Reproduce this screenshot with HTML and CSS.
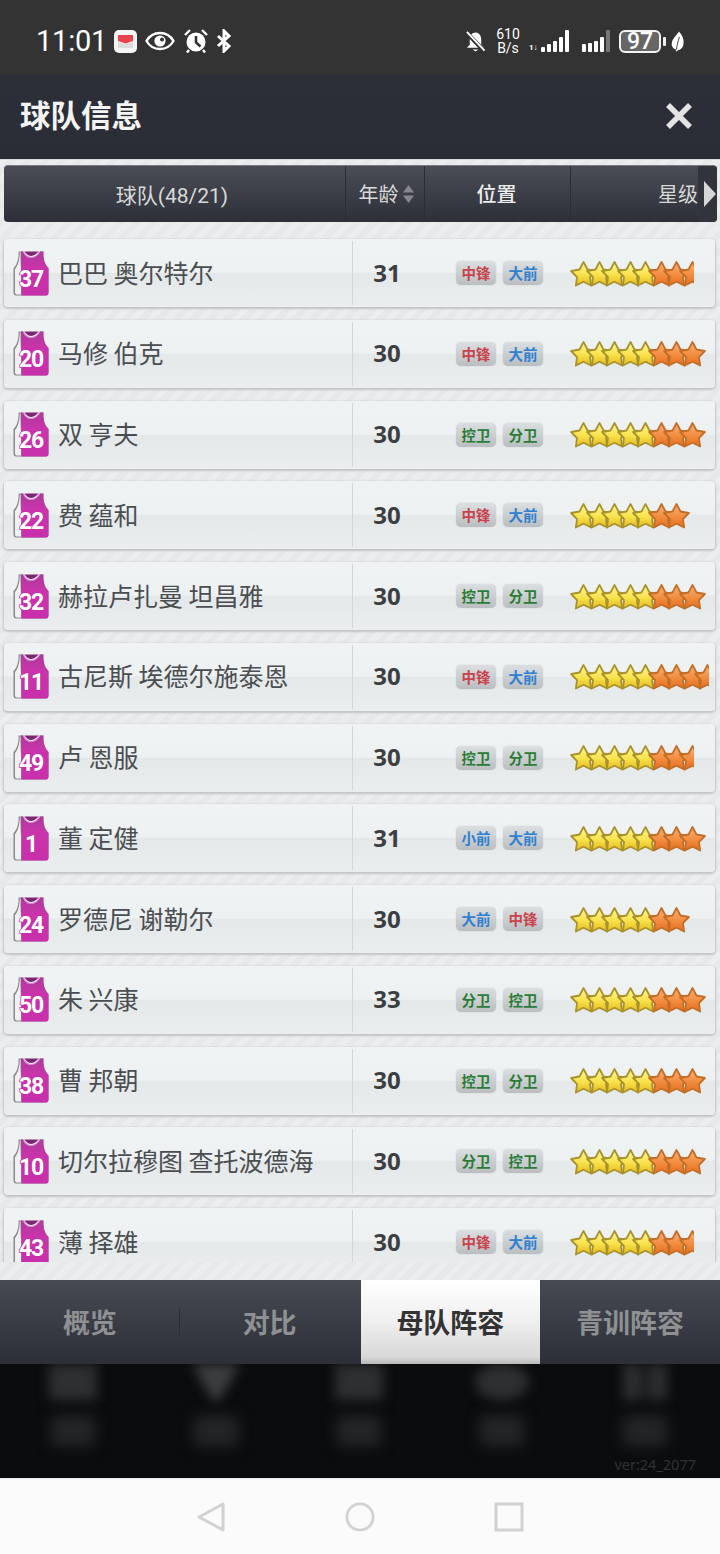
FILE: index.html
```html
<!DOCTYPE html>
<html lang="zh-CN">
<head>
<meta charset="utf-8">
<title>球队信息</title>
<link rel="stylesheet" href="styles.css">
</head>
<body>
<svg class="sprite" aria-hidden="true">
  <defs>
    <linearGradient id="gy" x1="0" y1="0" x2="0" y2="1"><stop offset="0" stop-color="#fff79a"/><stop offset=".55" stop-color="#f8e24a"/><stop offset="1" stop-color="#e4b81e"/></linearGradient>
    <linearGradient id="go" x1="0" y1="0" x2="0" y2="1"><stop offset="0" stop-color="#f9b27a"/><stop offset=".55" stop-color="#f28c3e"/><stop offset="1" stop-color="#e66e1e"/></linearGradient>
    <linearGradient id="gj" x1="0" y1="0" x2="0" y2="1"><stop offset="0" stop-color="#ad3a9a"/><stop offset=".35" stop-color="#c934ab"/><stop offset="1" stop-color="#c92fac"/></linearGradient>
    <symbol id="y" viewBox="0 0 27 28" overflow="visible"><path d="M13.5 2 17.5 9.500 25.860 11 19.970 17.100 21.140 25.500 13.500 21.800 5.860 25.500 7.030 17.100 1.140 11 9.500 9.500Z" fill="url(#gy)" stroke="#a8922e" stroke-width="1.800" stroke-linejoin="round"/></symbol>
    <symbol id="o" viewBox="0 0 27 28" overflow="visible"><path d="M13.5 2 17.5 9.500 25.860 11 19.970 17.100 21.140 25.500 13.500 21.800 5.860 25.500 7.030 17.100 1.140 11 9.500 9.500Z" fill="url(#go)" stroke="#c06e28" stroke-width="1.800" stroke-linejoin="round"/></symbol>
    <symbol id="j" viewBox="0 0 36 45">
      <path d="M5.500 .5H10C12 4.500 15 6.500 18 6.500S25 4.500 27 .5H30.500C30 6 31 13 35.500 17V41.500Q35.500 44.500 33 44.500H3Q.5 44.500 .5 41.500V17C4 14 6 7 5.500 .5Z" fill="#8a8a8d"/>
      <path d="M6.800 1.500 7.500 1.500C7.500 8 7.500 14 8 20V43.500H3.500Q2 43.500 2 41V18C5 15 6.800 8 6.800 1.500Z" fill="#f1f1f3"/>
      <path d="M8 .5H10C12 4.500 15 6.500 18 6.500S25 4.500 27 .5H30.500C30 6 31 13 35.500 17V41.500Q35.500 44.500 33 44.500H8.500V20C8 14 8 8 8 .5Z" fill="url(#gj)"/>
      <path d="M10.500 .5C12 4.500 15 6.500 18 6.500S25 4.500 26.500 .5" fill="none" stroke="#e28ad4" stroke-width="1.200"/>
      <path d="M11.500 .5C13.500 3.500 16 5 18 5S23 3.500 25.500 .5Z" fill="#7d2672"/>
    </symbol>
  </defs>
</svg>

<div class="phone">
  <header class="status">
    <div class="status-left">
      <span class="time">11:01</span>
      <svg class="ic-app" viewBox="0 0 23 23"><rect width="23" height="23" rx="5" fill="#f4f4f4"/><path d="M4 5H19V11L11.500 13.500 4 11Z" fill="#e9434d"/><path d="M4 12 11.500 14.500 19 12V18H4Z" fill="#dcdcdc"/></svg>
      <svg class="ic-eye" viewBox="0 0 30 20"><path d="M1.500 10C5 4 10 2 15 2S25 4 28.500 10C25 16 20 18 15 18S5 16 1.500 10Z" fill="none" stroke="#fff" stroke-width="2.400"/><circle cx="15" cy="10" r="5.600" fill="#fff"/><circle cx="17" cy="8.500" r="2" fill="#333"/></svg>
      <svg class="ic-alarm" viewBox="0 0 24 24"><circle cx="12" cy="13" r="9.500" fill="#fff"/><path d="M12 7V13.500L16.500 17.500" fill="none" stroke="#333" stroke-width="2.600"/><path d="M1 6 6 1M23 6 18 1M5 21 3 23.500M19 21 21 23.500" stroke="#fff" stroke-width="2.400"/></svg>
      <svg class="ic-bt" viewBox="0 0 18 24"><path d="M3 7 14 17 9 22V2L14 7 3 17" fill="none" stroke="#fff" stroke-width="3"/></svg>
    </div>
    <div class="status-right">
      <svg class="ic-bell" viewBox="0 0 22 23"><path d="M11 2C15.500 2 17 6 17 10V15L20 18H2L5 15V10C5 6 6.500 2 11 2Z" fill="#fff"/><path d="M8 20H14L11 22Z" fill="#fff"/><path d="M1.500 2 20 21.500" stroke="#333" stroke-width="4.500"/><path d="M2 1.500 20.500 21" stroke="#fff" stroke-width="2"/></svg>
      <span class="speed"><span>610</span><span>B/s</span></span>
      <span class="signal sig1">
        <i class="tiny">1↓</i><i class="h5"></i><i class="h7"></i><i class="h11"></i><i class="h15"></i><i class="h22"></i>
      </span>
      <span class="signal sig2">
        <i class="h7"></i><i class="h9"></i><i class="h11"></i><i class="h15"></i><i class="h22 off"></i>
      </span>
      <span class="battery"><span class="battery-body">97</span><i class="battery-tip"></i></span>
      <svg class="ic-leaf" viewBox="0 0 13 21"><path d="M8 .5C12 5 13 9 12.500 13 12 17 9 19 7 19 6 20 5.500 20.500 5 20.500 4.500 20 5 19 5.500 18.500 2 18 0 15 1 11 2 7 6 4 8 .5Z" fill="#fff"/><path d="M5.500 18.500C6 14 7 10 8.500 6" fill="none" stroke="#333" stroke-width=".9"/></svg>
    </div>
  </header>

  <div class="titlebar">
    <h1 class="title">球队信息</h1>
    <svg class="close" viewBox="0 0 28 28"><path d="M3 3 25 25M25 3 3 25" stroke="#e4e4e4" stroke-width="5.500"/></svg>
  </div>

  <main class="content">
    <div class="table-head">
      <div class="th th-team">球队(48/21)</div>
      <div class="th th-age">年龄<svg class="sort" viewBox="0 0 11 20"><path d="M5.500 1 11 8.500H0ZM5.500 19 0 11.500H11Z" fill="#85878b"/></svg></div>
      <div class="th th-pos">位置</div>
      <div class="th th-star">星级</div>
      <div class="th th-more"><svg class="more" viewBox="0 0 12 26"><path d="M0 0 12 13 0 26Z" fill="#d6d6d6"/></svg></div>
    </div>

    <div class="list">
      <div class="card"><div class="c-name"><svg class="jersey" viewBox="0 0 36 45"><use href="#j"/><text x="18" y="36">37</text></svg><span class="name">巴巴 奥尔特尔</span></div><div class="c-age">31</div><div class="c-pos"><span class="chip red">中锋</span><span class="chip blue">大前</span></div><div class="c-stars"><svg class="s"><use href="#y"/></svg><svg class="s"><use href="#y"/></svg><svg class="s"><use href="#y"/></svg><svg class="s"><use href="#y"/></svg><svg class="s"><use href="#y"/></svg><svg class="s"><use href="#o"/></svg><svg class="s"><use href="#o"/></svg><svg class="s half"><use href="#o" width="27" height="28"/></svg></div></div>

      <div class="card"><div class="c-name"><svg class="jersey" viewBox="0 0 36 45"><use href="#j"/><text x="18" y="36">20</text></svg><span class="name">马修 伯克</span></div><div class="c-age">30</div><div class="c-pos"><span class="chip red">中锋</span><span class="chip blue">大前</span></div><div class="c-stars"><svg class="s"><use href="#y"/></svg><svg class="s"><use href="#y"/></svg><svg class="s"><use href="#y"/></svg><svg class="s"><use href="#y"/></svg><svg class="s"><use href="#y"/></svg><svg class="s"><use href="#o"/></svg><svg class="s"><use href="#o"/></svg><svg class="s"><use href="#o"/></svg></div></div>

      <div class="card"><div class="c-name"><svg class="jersey" viewBox="0 0 36 45"><use href="#j"/><text x="18" y="36">26</text></svg><span class="name">双 亨夫</span></div><div class="c-age">30</div><div class="c-pos"><span class="chip green">控卫</span><span class="chip green">分卫</span></div><div class="c-stars"><svg class="s"><use href="#y"/></svg><svg class="s"><use href="#y"/></svg><svg class="s"><use href="#y"/></svg><svg class="s"><use href="#y"/></svg><svg class="s"><use href="#y"/></svg><svg class="s"><use href="#o"/></svg><svg class="s"><use href="#o"/></svg><svg class="s"><use href="#o"/></svg></div></div>

      <div class="card"><div class="c-name"><svg class="jersey" viewBox="0 0 36 45"><use href="#j"/><text x="18" y="36">22</text></svg><span class="name">费 蕴和</span></div><div class="c-age">30</div><div class="c-pos"><span class="chip red">中锋</span><span class="chip blue">大前</span></div><div class="c-stars"><svg class="s"><use href="#y"/></svg><svg class="s"><use href="#y"/></svg><svg class="s"><use href="#y"/></svg><svg class="s"><use href="#y"/></svg><svg class="s"><use href="#y"/></svg><svg class="s"><use href="#o"/></svg><svg class="s"><use href="#o"/></svg></div></div>

      <div class="card"><div class="c-name"><svg class="jersey" viewBox="0 0 36 45"><use href="#j"/><text x="18" y="36">32</text></svg><span class="name">赫拉卢扎曼 坦昌雅</span></div><div class="c-age">30</div><div class="c-pos"><span class="chip green">控卫</span><span class="chip green">分卫</span></div><div class="c-stars"><svg class="s"><use href="#y"/></svg><svg class="s"><use href="#y"/></svg><svg class="s"><use href="#y"/></svg><svg class="s"><use href="#y"/></svg><svg class="s"><use href="#y"/></svg><svg class="s"><use href="#o"/></svg><svg class="s"><use href="#o"/></svg><svg class="s"><use href="#o"/></svg></div></div>

      <div class="card"><div class="c-name"><svg class="jersey" viewBox="0 0 36 45"><use href="#j"/><text x="18" y="36">11</text></svg><span class="name">古尼斯 埃德尔施泰恩</span></div><div class="c-age">30</div><div class="c-pos"><span class="chip red">中锋</span><span class="chip blue">大前</span></div><div class="c-stars"><svg class="s"><use href="#y"/></svg><svg class="s"><use href="#y"/></svg><svg class="s"><use href="#y"/></svg><svg class="s"><use href="#y"/></svg><svg class="s"><use href="#y"/></svg><svg class="s"><use href="#o"/></svg><svg class="s"><use href="#o"/></svg><svg class="s"><use href="#o"/></svg><svg class="s half"><use href="#o" width="27" height="28"/></svg></div></div>

      <div class="card"><div class="c-name"><svg class="jersey" viewBox="0 0 36 45"><use href="#j"/><text x="18" y="36">49</text></svg><span class="name">卢 恩服</span></div><div class="c-age">30</div><div class="c-pos"><span class="chip green">控卫</span><span class="chip green">分卫</span></div><div class="c-stars"><svg class="s"><use href="#y"/></svg><svg class="s"><use href="#y"/></svg><svg class="s"><use href="#y"/></svg><svg class="s"><use href="#y"/></svg><svg class="s"><use href="#y"/></svg><svg class="s"><use href="#o"/></svg><svg class="s"><use href="#o"/></svg><svg class="s half"><use href="#o" width="27" height="28"/></svg></div></div>

      <div class="card"><div class="c-name"><svg class="jersey" viewBox="0 0 36 45"><use href="#j"/><text x="18" y="36">1</text></svg><span class="name">董 定健</span></div><div class="c-age">31</div><div class="c-pos"><span class="chip blue">小前</span><span class="chip blue">大前</span></div><div class="c-stars"><svg class="s"><use href="#y"/></svg><svg class="s"><use href="#y"/></svg><svg class="s"><use href="#y"/></svg><svg class="s"><use href="#y"/></svg><svg class="s"><use href="#y"/></svg><svg class="s"><use href="#o"/></svg><svg class="s"><use href="#o"/></svg><svg class="s"><use href="#o"/></svg></div></div>

      <div class="card"><div class="c-name"><svg class="jersey" viewBox="0 0 36 45"><use href="#j"/><text x="18" y="36">24</text></svg><span class="name">罗德尼 谢勒尔</span></div><div class="c-age">30</div><div class="c-pos"><span class="chip blue">大前</span><span class="chip red">中锋</span></div><div class="c-stars"><svg class="s"><use href="#y"/></svg><svg class="s"><use href="#y"/></svg><svg class="s"><use href="#y"/></svg><svg class="s"><use href="#y"/></svg><svg class="s"><use href="#y"/></svg><svg class="s"><use href="#o"/></svg><svg class="s"><use href="#o"/></svg></div></div>

      <div class="card"><div class="c-name"><svg class="jersey" viewBox="0 0 36 45"><use href="#j"/><text x="18" y="36">50</text></svg><span class="name">朱 兴康</span></div><div class="c-age">33</div><div class="c-pos"><span class="chip green">分卫</span><span class="chip green">控卫</span></div><div class="c-stars"><svg class="s"><use href="#y"/></svg><svg class="s"><use href="#y"/></svg><svg class="s"><use href="#y"/></svg><svg class="s"><use href="#y"/></svg><svg class="s"><use href="#y"/></svg><svg class="s"><use href="#o"/></svg><svg class="s"><use href="#o"/></svg><svg class="s"><use href="#o"/></svg></div></div>

      <div class="card"><div class="c-name"><svg class="jersey" viewBox="0 0 36 45"><use href="#j"/><text x="18" y="36">38</text></svg><span class="name">曹 邦朝</span></div><div class="c-age">30</div><div class="c-pos"><span class="chip green">控卫</span><span class="chip green">分卫</span></div><div class="c-stars"><svg class="s"><use href="#y"/></svg><svg class="s"><use href="#y"/></svg><svg class="s"><use href="#y"/></svg><svg class="s"><use href="#y"/></svg><svg class="s"><use href="#y"/></svg><svg class="s"><use href="#o"/></svg><svg class="s"><use href="#o"/></svg><svg class="s"><use href="#o"/></svg></div></div>

      <div class="card"><div class="c-name"><svg class="jersey" viewBox="0 0 36 45"><use href="#j"/><text x="18" y="36">10</text></svg><span class="name">切尔拉穆图 查托波德海</span></div><div class="c-age">30</div><div class="c-pos"><span class="chip green">分卫</span><span class="chip green">控卫</span></div><div class="c-stars"><svg class="s"><use href="#y"/></svg><svg class="s"><use href="#y"/></svg><svg class="s"><use href="#y"/></svg><svg class="s"><use href="#y"/></svg><svg class="s"><use href="#y"/></svg><svg class="s"><use href="#o"/></svg><svg class="s"><use href="#o"/></svg><svg class="s"><use href="#o"/></svg></div></div>

      <div class="card"><div class="c-name"><svg class="jersey" viewBox="0 0 36 45"><use href="#j"/><text x="18" y="36">43</text></svg><span class="name">薄 择雄</span></div><div class="c-age">30</div><div class="c-pos"><span class="chip red">中锋</span><span class="chip blue">大前</span></div><div class="c-stars"><svg class="s"><use href="#y"/></svg><svg class="s"><use href="#y"/></svg><svg class="s"><use href="#y"/></svg><svg class="s"><use href="#y"/></svg><svg class="s"><use href="#y"/></svg><svg class="s"><use href="#o"/></svg><svg class="s"><use href="#o"/></svg><svg class="s half"><use href="#o" width="27" height="28"/></svg></div></div>
    </div>
  </main>

  <nav class="tabs">
    <div class="tab tab-sep">概览</div>
    <div class="tab">对比</div>
    <div class="tab active">母队阵容</div>
    <div class="tab">青训阵容</div>
  </nav>

  <div class="blurred">
    <div class="b-col"><div class="b-icon b-rect"></div><div class="b-label"></div></div>
    <div class="b-col"><div class="b-icon b-funnel"></div><div class="b-label"></div></div>
    <div class="b-col"><div class="b-icon b-rect"></div><div class="b-label"></div></div>
    <div class="b-col"><div class="b-icon b-round"></div><div class="b-label"></div></div>
    <div class="b-col"><div class="b-icon b-bars"></div><div class="b-label"></div></div>
    <span class="ver">ver:24_2077</span>
  </div>

  <footer class="navbar">
    <svg class="nav-ic" viewBox="0 0 30 32"><path d="M27 3V29L3 16Z" fill="none" stroke="#d2d2d2" stroke-width="3" stroke-linejoin="round"/></svg>
    <svg class="nav-ic" viewBox="0 0 32 32"><circle cx="16" cy="16" r="14" fill="none" stroke="#d2d2d2" stroke-width="3"/></svg>
    <svg class="nav-ic" viewBox="0 0 30 30"><rect x="2" y="2" width="26" height="26" fill="none" stroke="#d2d2d2" stroke-width="3"/></svg>
  </footer>
</div>
</body>
</html>
```

FILE: styles.css
```css
* { box-sizing: border-box; }
html, body { margin: 0; padding: 0; }
body {
  width: 720px;
  height: 1554px;
  overflow: hidden;
  font-family: "Noto Sans CJK SC", "Noto Sans", sans-serif;
  background: #fbfbfb;
}
.sprite { display: block; width: 0; height: 0; }
.phone { display: flex; flex-direction: column; width: 720px; height: 1554px; }

/* status bar */
.status {
  flex: none;
  height: 74px;
  background: #333333;
  display: flex;
  justify-content: space-between;
  align-items: center;
  padding: 8px 36px 0 36px;
  color: #fff;
}
.status-left, .status-right { display: flex; align-items: center; }
.time { font: 400 29px/1 Roboto, sans-serif; letter-spacing: -.2px; width: 78px; }
.ic-app { width: 23px; height: 23px; margin-right: 8px; }
.ic-eye { width: 30px; height: 20px; margin-right: 9px; }
.ic-alarm { width: 24px; height: 24px; margin-right: 7px; }
.ic-bt { width: 18px; height: 24px; }
.ic-bell { width: 21px; height: 23px; margin-right: 9px; }
.speed { display: flex; flex-direction: column; align-items: center; font: 400 14px/14px Roboto, sans-serif; width: 26px; margin-right: 8px; }
.signal { display: flex; align-items: flex-end; height: 22px; gap: 2px; }
.signal i { display: block; width: 4px; background: #fff; border-radius: 1px; flex: none; }
.sig1 { margin-right: 13px; }
.sig2 { margin-right: 9px; }
.signal .tiny { background: none; width: 10px; font: 700 8px/9px Roboto, sans-serif; color: #fff; white-space: nowrap; }
.h5 { height: 5px; } .h7 { height: 8px; } .h9 { height: 9px; } .h11 { height: 11px; } .h15 { height: 15px; } .h22 { height: 22px; }
.signal .off { background: #777; }
.battery { display: flex; align-items: center; margin-right: 5px; }
.battery-body {
  width: 42px; height: 23px;
  border: 2px solid #f2f2f2;
  border-radius: 6px;
  background: #666;
  font: 500 23px/19px Roboto, sans-serif;
  text-align: center;
  color: #fff;
}
.battery-tip { width: 3px; height: 9px; margin-left: 2px; background: #eee; border-radius: 1px; }
.ic-leaf { width: 13px; height: 21px; }

/* title bar */
.titlebar {
  flex: none;
  height: 85px;
  background: linear-gradient(#2c2f38, #2a2d36);
  display: flex;
  align-items: center;
  justify-content: space-between;
  padding: 0 27px 1px 20px;
}
.title { margin: 0 0 3px; font-size: 30.500px; line-height: 1; font-weight: 700; color: #f4f4f4; }
.close { width: 28px; height: 28px; }

/* content */
.content {
  flex: none;
  height: 1121px;
  padding-top: 5px;
  background: repeating-linear-gradient(135deg, #ebedee 0 6px, #e6e8e9 6px 12px);
  border-top: 1px solid #d5d7d9;
}
.table-head {
  height: 57px;
  margin: 0 3px 0 4px;
  display: flex;
  border-radius: 4px;
  border-top: 1px solid #777a80;
  background: linear-gradient(#4a4d56, #2d3038);
  color: #d9d9d9;
  font-size: 20px;
  overflow: hidden;
}
.th { display: flex; align-items: center; justify-content: center; border-right: 1px solid #2b2d33; flex: none; height: 100%; padding-bottom: 1px; }
.th-team { width: 342px; padding-right: 5px; font-family: Roboto, "Noto Sans CJK SC", sans-serif; font-size: 21px; }
.th-age { width: 79px; gap: 4px; padding-left: 2px; }
.th-pos { width: 146px; color: #eeeeee; font-weight: 500; padding-right: 2px; }
.th-star { width: 127px; justify-content: flex-end; border-right: none; padding-right: 0; }
.th-more { width: 19px; border-right: none; background: #32343b; justify-content: flex-end; padding-right: 1px; }
.sort { width: 11px; height: 20px; }
.more { width: 12px; height: 26px; }

.list {
  height: 1040px;
  padding: 17px 5px 0 4px;
  overflow: hidden;
  display: flex;
  flex-direction: column;
  gap: 12.750px;
}
.card {
  flex: none;
  height: 68px;
  display: flex;
  align-items: center;
  border-radius: 4px;
  background: linear-gradient(#f0f3f4 0, #eef1f2 49%, #e5e8e9 50%, #ebeeee 100%);
  box-shadow: 0 1px 2px 1px #c2c4c6;
}
.c-name {
  flex: none;
  width: 349px;
  height: 64px;
  display: flex;
  align-items: center;
  padding-left: 9px;
  border-right: 1px solid #d3d6d7;
}
.jersey { width: 36px; height: 45px; margin-right: 9px; flex: none; }
.jersey text {
  font-family: Roboto, "Liberation Sans", sans-serif;
  font-size: 23px;
  font-weight: 700;
  letter-spacing: -1.200px;
  fill: #fff;
  stroke: #c92fac;
  stroke-width: 1.500px;
  paint-order: stroke;
  text-anchor: middle;
}
.name { font-size: 25px; line-height: 1; color: #4b4e51; white-space: nowrap; margin-top: -2px; }
.c-age { flex: none; width: 68px; text-align: center; font: 700 24px/1 "Open Sans", "Noto Sans", sans-serif; color: #3c3f42; margin-top: -1px; }
.c-pos { flex: none; width: 149px; padding-left: 35px; display: flex; gap: 7px; }
.chip {
  width: 40px; height: 24px;
  border-radius: 5px;
  background: linear-gradient(#dcdfe1, #babec1);
  box-shadow: 0 0 1px #aaa;
  font-size: 14.500px;
  font-weight: 700;
  line-height: 24px;
  text-align: center;
}
.red { color: #c8434c; }
.blue { color: #2f80cf; }
.green { color: #2a7c36; }
.c-stars { display: flex; flex: none; height: 28px; margin-top: 1px; }
.s { flex: none; width: 27px; height: 28px; margin-right: -11.500px; }
.s.half { width: 15px; }

/* tabs */
.tabs {
  flex: none;
  height: 84px;
  display: flex;
  background: linear-gradient(#464a52, #2c2f38);
}
.tab {
  flex: 1;
  display: flex;
  align-items: center;
  justify-content: center;
  font-size: 27px;
  font-weight: 700;
  color: #8e9092;
  padding-bottom: 2px;
  position: relative;
}
.tab-sep::after {
  content: "";
  position: absolute;
  right: 0;
  top: 28px;
  height: 28px;
  border-right: 1px solid #2c2e35;
}
.tab.active {
  color: #333333;
  margin-left: 1px;
  background: linear-gradient(#ffffff 0, #f1f1f1 45%, #d8d8d8 92%, #b9b9b9 100%);
}

/* blurred area */
.blurred {
  flex: none;
  height: 114px;
  background: #0b0c0e;
  display: flex;
  justify-content: space-between;
  padding: 0 50px 0 48px;
  position: relative;
  overflow: hidden;
}
.b-col { display: flex; flex-direction: column; align-items: center; width: 50px; gap: 16px; }
.b-icon { width: 48px; height: 36px; filter: blur(6px); background: #2e2f31; flex: none; }
.b-funnel { background: none; }
.b-funnel::before {
  content: "";
  display: block;
  height: 100%;
  clip-path: polygon(0 0, 100% 0, 58% 100%, 42% 100%);
  background: #3c3d3f;
}
.b-round { width: 54px; border-radius: 50%; }
.b-bars { width: 44px; background: linear-gradient(90deg, #2e2f31 0 40%, #141517 40% 60%, #2e2f31 60% 100%); }
.b-label { width: 44px; height: 30px; filter: blur(7px); background: #242527; flex: none; }
.ver {
  position: absolute;
  right: 24px;
  bottom: 5px;
  font: 400 14.500px/18px "Noto Sans", sans-serif;
  color: #303234;
}

/* nav bar */
.navbar {
  flex: 1;
  background: #fbfbfb;
  border-top: 1px solid #ededed;
  display: flex;
  align-items: center;
  padding: 0 196px;
  justify-content: space-between;
}
.nav-ic { width: 30px; height: 32px; }
```
